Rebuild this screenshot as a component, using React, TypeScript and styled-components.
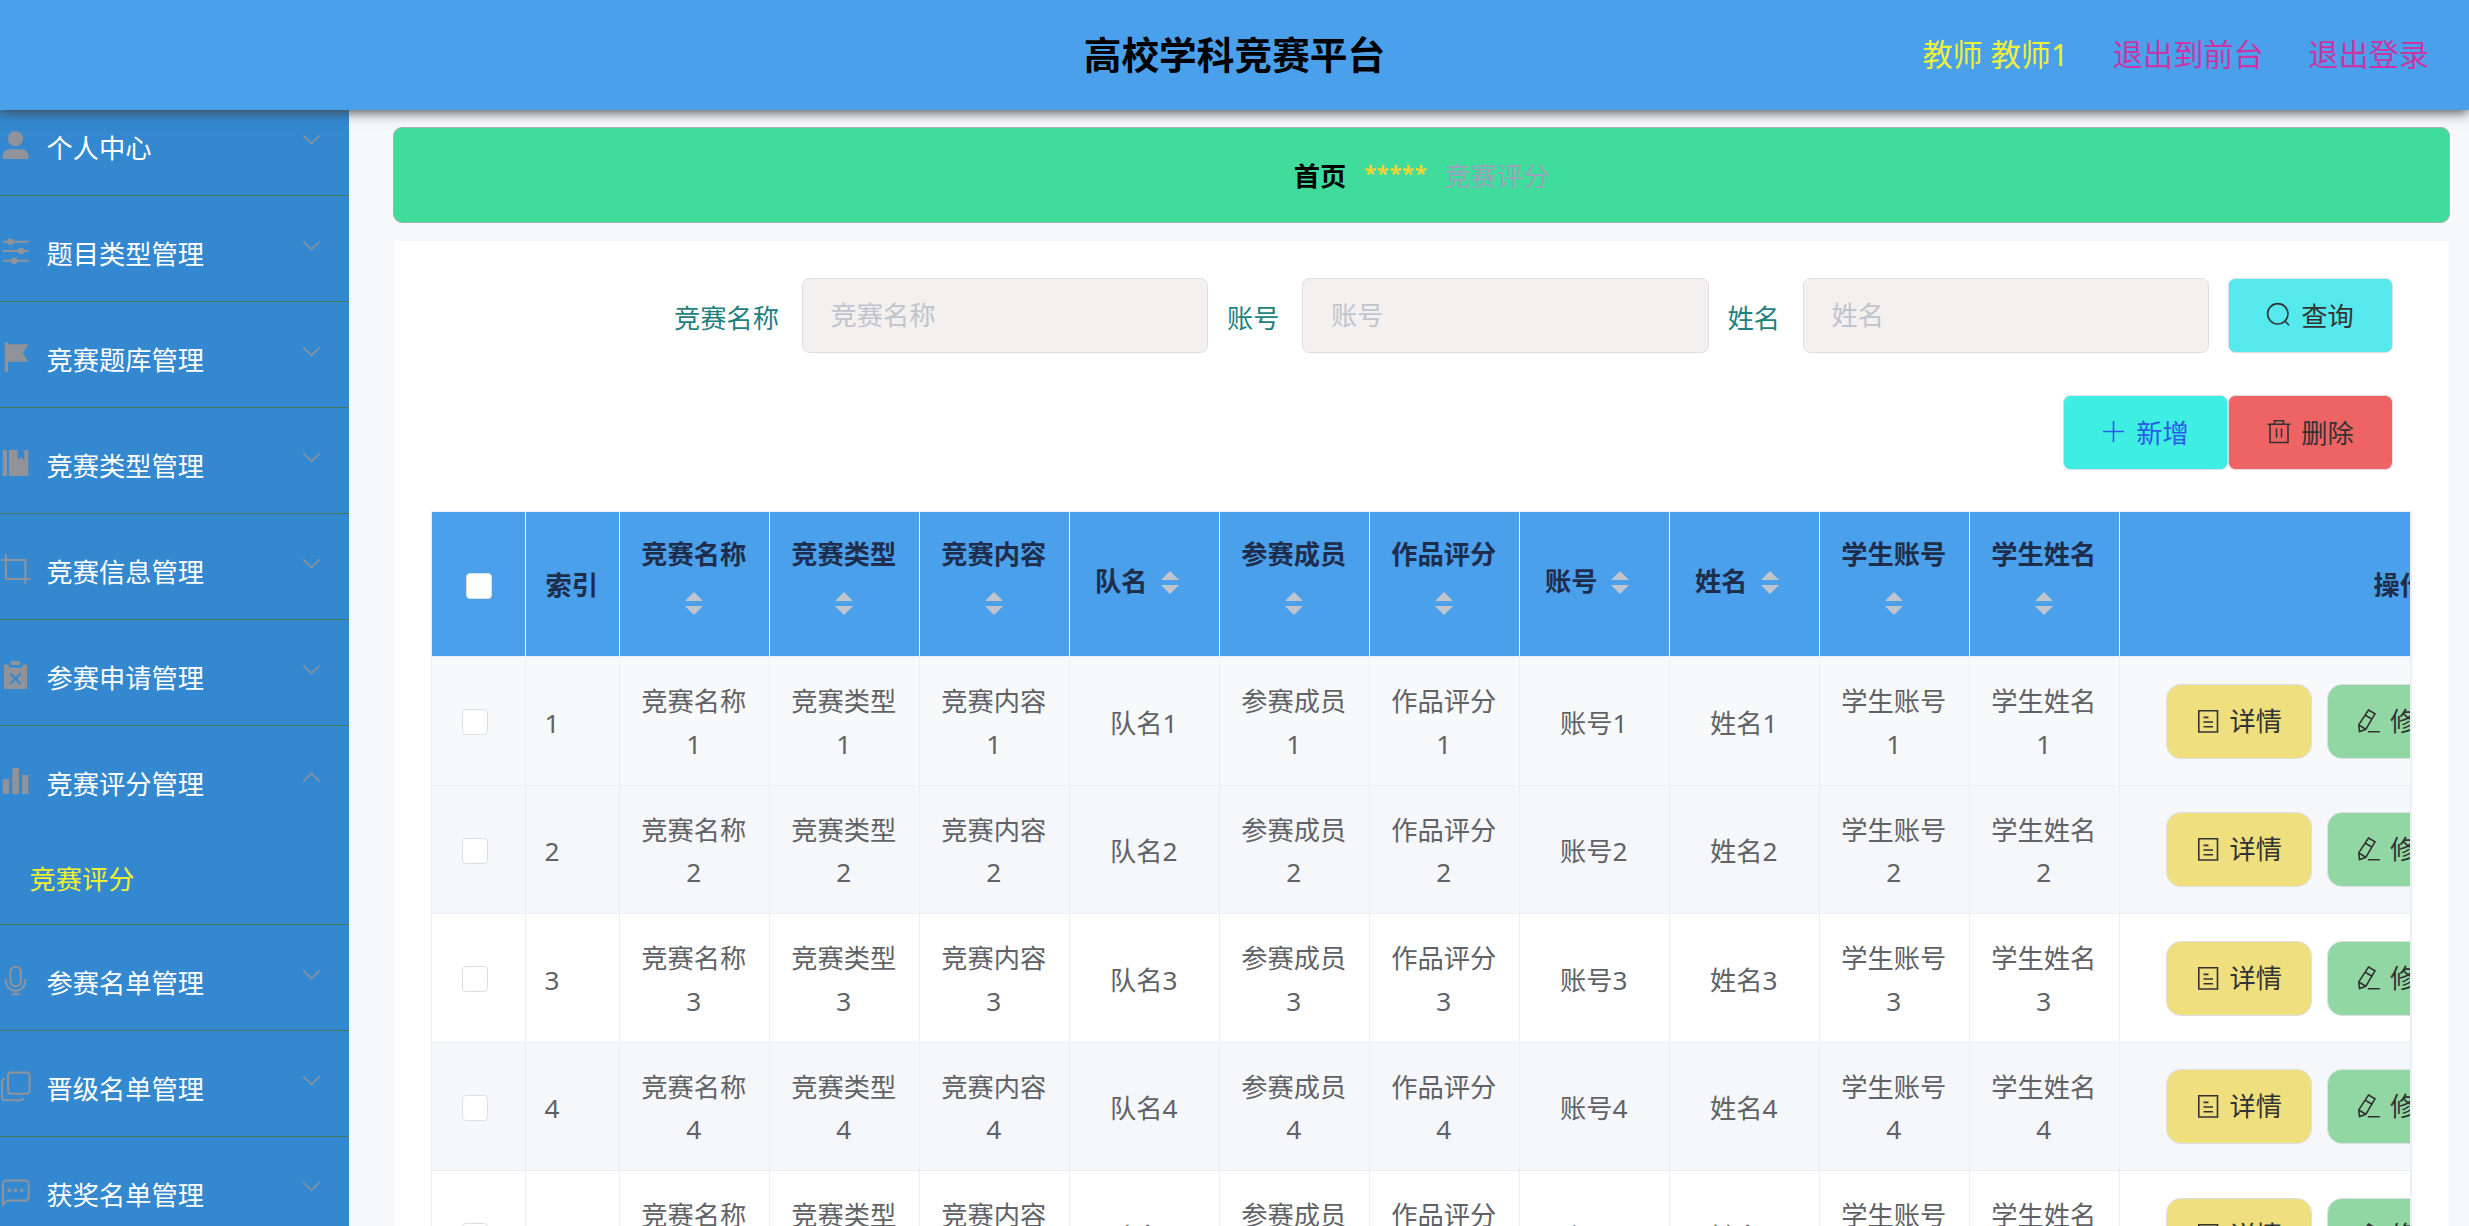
import React from "react";
import styled, { createGlobalStyle, css } from "styled-components";

const GlobalStyle = createGlobalStyle`
  * { box-sizing: border-box; }
  html, body { margin: 0; padding: 0; }
  body {
    font-family: "Noto Sans", "Noto Sans CJK SC", sans-serif;
    font-size: 26.25px;
    background: #f6f8fb;
    overflow: hidden;
  }
`;

const Page = styled.div`
  display: flex;
  flex-direction: column;
  height: 1226px;
  overflow: hidden;
`;

const Header = styled.header`
  position: relative;
  z-index: 2;
  flex: none;
  display: grid;
  grid-template-columns: 1fr auto 1fr;
  align-items: center;
  height: 110px;
  padding: 0 40px;
  background: #4aa0ea;
  box-shadow: 0 2px 12px #444;
`;

const Title = styled.h1`
  grid-column: 2;
  margin: 0;
  font-size: 37.7px;
  line-height: 110px;
  font-weight: 700;
  color: #000;
`;

const HeaderLinks = styled.nav`
  justify-self: end;
  display: flex;
  gap: 44.5px;
  font-size: 30.2px;
  line-height: 108px;
`;

const UserName = styled.span`
  color: #eef03a;
`;

const HeaderLink = styled.a`
  color: #c935a4;
`;

const Body = styled.div`
  flex: 1;
  display: flex;
  min-height: 0;
`;

const Sidebar = styled.aside`
  flex: none;
  width: 349px;
  margin-top: -20px;
  background: #3388cf;
  overflow: hidden;
`;

const MenuGroup = styled.section`
  border-bottom: 1px solid #42775a;
`;

const MenuTitle = styled.div`
  display: flex;
  align-items: center;
  height: 105px;
  padding: 8px 28px 0 0;
  color: #fff;
`;

const MenuLabel = styled.span`
  flex: 1;
  margin-left: 15.5px;
`;

const MenuIcon = styled.svg`
  width: 31px;
  height: 31px;
  margin-top: -2px;
  color: #909399;
  fill: currentColor;
  stroke: none;
`;

const Arrow = styled.svg<{ $open?: boolean }>`
  width: 19px;
  height: 11px;
  margin-top: ${(p) => (p.$open ? "-10px" : "-14px")};
  transform: ${(p) => (p.$open ? "rotate(180deg)" : "none")};
  fill: none;
  stroke: #909399;
  stroke-width: 1.5;
`;

const SubItem = styled.div`
  height: 93px;
  padding-left: 29.5px;
  line-height: 97px;
  color: #f0f032;
`;

const Main = styled.main`
  flex: 1;
  min-width: 0;
  display: flex;
  flex-direction: column;
  padding: 17px 19px 0 44px;
`;

const Breadcrumb = styled.div`
  flex: none;
  display: flex;
  justify-content: center;
  height: 96px;
  line-height: 96px;
  border: 1px solid #a9b2ae;
  border-radius: 9px;
  background: #3fdc9b;
`;

const Home = styled.span`
  font-weight: 700;
  color: #000;
`;

const Stars = styled.span`
  margin: 0 17px 0 18px;
  font-size: 22px;
  line-height: 89px;
  font-weight: 700;
  letter-spacing: 0.7px;
  color: #f2d333;
`;

const Current = styled.span`
  color: #97a3b8;
`;

const Card = styled.div`
  flex: 1;
  min-height: 0;
  margin: 18px 1px 0;
  padding: 37px 37px 0;
  background: #fff;
`;

const SearchBar = styled.div`
  display: flex;
  justify-content: flex-end;
  align-items: center;
  gap: 19px;
  height: 75px;
  padding-right: 19px;
`;

const Field = styled.label`
  display: flex;
  align-items: center;
  gap: 22.5px;
  color: #1f8080;
`;

const FieldLabel = styled.span`
  padding-top: 2px;
`;

const Input = styled.input`
  width: 406.5px;
  height: 75px;
  padding: 0 28px 1px;
  border: 1px solid #dcdfe6;
  border-radius: 7.5px;
  background: #f4f0ef;
  font: inherit;
  &::placeholder {
    color: #c0c4cc;
    opacity: 1;
  }
`;

const toneStyles = {
  query: css`background: #55e8ec; color: #333;`,
  add: css`background: #3eeee3; color: #2a5be8;`,
  remove: css`background: #ee6464; color: #333;`,
  detail: css`background: #efdf7f; color: #333; border-radius: 15px; width: 145.5px;`,
  edit: css`background: #90d7a3; color: #333; border-radius: 15px; width: 145.5px;`,
};

const Button = styled.button<{ $tone: keyof typeof toneStyles }>`
  flex: none;
  display: flex;
  align-items: center;
  justify-content: center;
  gap: 9px;
  width: 165px;
  height: 75px;
  padding: 0 1px 1px 0;
  border: 1px solid #dcdfe6;
  border-radius: 7.5px;
  font: inherit;
  white-space: nowrap;
  ${(p) => toneStyles[p.$tone]}
`;

const ButtonIcon = styled.svg`
  flex: none;
  width: 26px;
  height: 26px;
  fill: none;
  stroke: currentColor;
  stroke-width: 1.6;
`;

const Toolbar = styled.div`
  display: flex;
  justify-content: flex-end;
  margin-top: 42px;
  padding-right: 19px;
`;

const Table = styled.div`
  margin-top: 41px;
  border: 1px solid #ebeef5;
  border-right-width: 2px;
  overflow: hidden;
`;

const Row = styled.div<{ $bg: string }>`
  display: grid;
  grid-template-columns: 94px 94px repeat(10, 150px) 562px;
  width: 2250px;
  height: 128.5px;
  background: ${(p) => p.$bg};
`;

const HeadRow = styled(Row)`
  height: 145px;
  font-weight: 700;
  color: #1f2d4d;
`;

const Cell = styled.div<{ $align?: "left" | "center" }>`
  display: flex;
  flex-direction: column;
  justify-content: center;
  align-items: ${(p) => (p.$align === "left" ? "flex-start" : "center")};
  padding: 4px 20px 0 18.5px;
  border-right: 1px solid #ebeef5;
  border-bottom: 1px solid #ebeef5;
  line-height: 42.5px;
  text-align: center;
  color: #606266;
`;

const CheckCell = styled(Cell)`
  padding: 3px 7px 0 0;
`;

const HeadCell = styled(Cell)`
  padding-top: 2px;
  color: inherit;
`;

const HeadCheckCell = styled(HeadCell)`
  padding: 4px 0 0;
`;

const SortLabel = styled.div<{ $stacked: boolean }>`
  display: flex;
  flex-direction: ${(p) => (p.$stacked ? "column" : "row")};
  align-items: center;
  margin-top: ${(p) => (p.$stacked ? "-22px" : "-7px")};
`;

const Sorter = styled.span<{ $stacked: boolean }>`
  display: flex;
  flex-direction: column;
  align-items: center;
  gap: 5px;
  width: 45px;
  margin-top: ${(p) => (p.$stacked ? "16px" : "2px")};
  &::before,
  &::after {
    content: "";
    border: 0 solid transparent;
    border-left-width: 9px;
    border-right-width: 9px;
  }
  &::before {
    border-bottom: 9px solid #c0c4cc;
  }
  &::after {
    border-top: 9px solid #c0c4cc;
  }
`;

const CheckBox = styled.span`
  width: 26px;
  height: 26px;
  border: 1px solid #dcdfe6;
  border-radius: 4px;
  background: #fff;
`;

const ActionCell = styled(Cell)`
  flex-direction: row;
  justify-content: flex-start;
  gap: 15px;
  padding: 1px 0 0 46px;
`;

const line = { fill: "none", stroke: "currentColor", strokeWidth: 2 };

const icons: Record<string, React.ReactNode> = {
  user: (
    <>
      <circle cx="15.5" cy="8.7" r="7.6" />
      <path d="M2.7 29V26a6.8 6.8 0 0 1 6.8-6.8h12.3a6.8 6.8 0 0 1 6.8 6.8v3z" />
    </>
  ),
  operation: (
    <>
      <path {...line} d="M2.7 5.7h26M2.7 15h26M2.7 24.8h26" />
      <circle cx="10.4" cy="5.7" r="3.3" />
      <circle cx="21" cy="15" r="3.3" />
      <circle cx="14.4" cy="24.8" r="3.3" />
    </>
  ),
  flag: <path d="M4.7.3H8v2h20.4l-5.6 8.8 5.6 8.6H8V30H4.7z" />,
  book: <path d="M2.7 2H7v26H2.7zM9 2h8.7v10l3.3-3 3.3 3V2h4v26H9z" />,
  crop: <path {...line} d="M5.9.3V25h24.5M1 6h24.4v24.3" />,
  release: (
    <>
      <path d="M4 4.7h5v2.9h13.3V4.7H27V29H4zM11 1h9v4h-9z" />
      <path d="M10.3 13.5l10.4 10.4M20.7 13.5L10.3 23.9" fill="none" stroke="#3388cf" strokeWidth="2" />
    </>
  ),
  data: <path d="M2.7 13H9v15H2.7zM12.3 2H19v26h-6.7zM22 9h6.4v19H22z" />,
  mic: (
    <path
      {...line}
      d="M10.4 7a5.1 5.1 0 0 1 10.4 0v9a5.1 5.1 0 0 1-10.4 0zM6 14v2.2a9.6 9.6 0 0 0 19.2 0V14M15.6 25.8v3.4M11.3 29.2h8.6"
    />
  ),
  copy: (
    <path
      {...line}
      d="M11 1.4h15.5a3 3 0 0 1 3 3v15.4a3 3 0 0 1-3 3H11a3 3 0 0 1-3-3V4.4a3 3 0 0 1 3-3zM4.8 7.6C3 8 2 9 2 11v15.5a2.8 2.8 0 0 0 2.8 2.8H20c2 0 3-.8 3.3-2.4"
    />
  ),
  chat: (
    <>
      <path {...line} d="M3 27.5V6.6a3 3 0 0 1 3-3h19.6a3 3 0 0 1 3 3v14a3 3 0 0 1-3 3H7.3z" />
      <circle cx="9.4" cy="13.2" r="1.8" />
      <circle cx="15.6" cy="13.2" r="1.8" />
      <circle cx="21.9" cy="13.2" r="1.8" />
    </>
  ),
};

const menu: { icon: string; label: string; children?: string[] }[] = [
  { icon: "user", label: "个人中心" },
  { icon: "operation", label: "题目类型管理" },
  { icon: "flag", label: "竞赛题库管理" },
  { icon: "book", label: "竞赛类型管理" },
  { icon: "crop", label: "竞赛信息管理" },
  { icon: "release", label: "参赛申请管理" },
  { icon: "data", label: "竞赛评分管理", children: ["竞赛评分"] },
  { icon: "mic", label: "参赛名单管理" },
  { icon: "copy", label: "晋级名单管理" },
  { icon: "chat", label: "获奖名单管理" },
];

const columns = [
  "竞赛名称",
  "竞赛类型",
  "竞赛内容",
  "队名",
  "参赛成员",
  "作品评分",
  "账号",
  "姓名",
  "学生账号",
  "学生姓名",
];

const rowColors = ["#f7f9fb", "#f5f7fb", "#ffffff", "#f5f7fb", "#ffffff"];

const filters = ["竞赛名称", "账号", "姓名"];

const SearchIcon = () => (
  <ButtonIcon viewBox="0 0 26 26">
    <circle cx="11.8" cy="11.8" r="10.2" />
    <path d="M19 19l4 4.2" />
  </ButtonIcon>
);

const PlusIcon = () => (
  <ButtonIcon viewBox="0 0 26 26">
    <path d="M12.5 2v21M2 12.5h21" />
  </ButtonIcon>
);

const TrashIcon = () => (
  <ButtonIcon viewBox="0 0 26 26">
    <path d="M1.5 5.2h23M4 5.2v18.3h18V5.2M8.5 5V1.8h9V5M10.5 9.5v9M15.5 9.5v9" />
  </ButtonIcon>
);

const DocIcon = () => (
  <ButtonIcon viewBox="0 0 26 26">
    <path d="M3.8 2.8h18.7v21.2H3.8zM8.5 9.4h5M8.5 14h9.5M8.5 18.8h9.5" />
  </ButtonIcon>
);

const EditIcon = () => (
  <ButtonIcon viewBox="0 0 26 26">
    <path d="M13.5 2l6.5 3.7-9.2 15.6-6.3 2.3-.8-6.7zM10.8 7.5l6.3 3.7M3.8 17l7 4.2M12.8 23.8h12" />
  </ButtonIcon>
);

function SideMenu() {
  return (
    <Sidebar>
      {menu.map((item) => (
        <MenuGroup key={item.label}>
          <MenuTitle>
            <MenuIcon viewBox="0 0 31 31">{icons[item.icon]}</MenuIcon>
            <MenuLabel>{item.label}</MenuLabel>
            <Arrow viewBox="0 0 19 11" $open={!!item.children}>
              <path d="M1.2 1.2l8.3 8.3 8.3-8.3" />
            </Arrow>
          </MenuTitle>
          {item.children?.map((child) => (
            <SubItem key={child}>{child}</SubItem>
          ))}
        </MenuGroup>
      ))}
    </Sidebar>
  );
}

function ScoreTable() {
  return (
    <Table>
      <HeadRow $bg="#4aa0ea">
        <HeadCheckCell>
          <CheckBox />
        </HeadCheckCell>
        <HeadCell>索引</HeadCell>
        {columns.map((name) => {
          const stacked = name.length > 2;
          return (
            <HeadCell key={name}>
              <SortLabel $stacked={stacked}>
                {name}
                <Sorter $stacked={stacked} />
              </SortLabel>
            </HeadCell>
          );
        })}
        <HeadCell>操作</HeadCell>
      </HeadRow>
      {rowColors.map((bg, i) => (
        <Row key={i} $bg={bg}>
          <CheckCell>
            <CheckBox />
          </CheckCell>
          <Cell $align="left">{i + 1}</Cell>
          {columns.map((name) => (
            <Cell key={name}>
              {name}
              {i + 1}
            </Cell>
          ))}
          <ActionCell>
            <Button $tone="detail">
              <DocIcon />
              详情
            </Button>
            <Button $tone="edit">
              <EditIcon />
              修改
            </Button>
          </ActionCell>
        </Row>
      ))}
    </Table>
  );
}

export default function App() {
  return (
    <Page>
      <GlobalStyle />
      <Header>
        <Title>高校学科竞赛平台</Title>
        <HeaderLinks>
          <UserName>教师 教师1</UserName>
          <HeaderLink>退出到前台</HeaderLink>
          <HeaderLink>退出登录</HeaderLink>
        </HeaderLinks>
      </Header>
      <Body>
        <SideMenu />
        <Main>
          <Breadcrumb>
            <Home>首页</Home>
            <Stars>*****</Stars>
            <Current>竞赛评分</Current>
          </Breadcrumb>
          <Card>
            <SearchBar>
              {filters.map((name) => (
                <Field key={name}>
                  <FieldLabel>{name}</FieldLabel>
                  <Input placeholder={name} />
                </Field>
              ))}
              <Button $tone="query">
                <SearchIcon />
                查询
              </Button>
            </SearchBar>
            <Toolbar>
              <Button $tone="add">
                <PlusIcon />
                新增
              </Button>
              <Button $tone="remove">
                <TrashIcon />
                删除
              </Button>
            </Toolbar>
            <ScoreTable />
          </Card>
        </Main>
      </Body>
    </Page>
  );
}
